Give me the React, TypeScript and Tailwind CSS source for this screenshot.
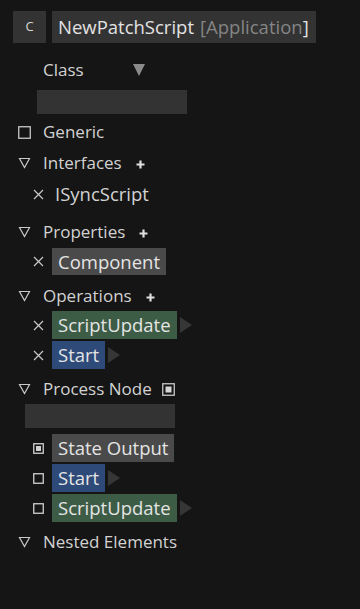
import React from 'react';

const font = { fontFamily: '"Open Sans", "Noto Sans", sans-serif' };

const Tri = () => (
  <svg width="13" height="12" viewBox="0 0 13 12" className="shrink-0">
    <path d="M1.5 1.5 H11.5 L6.5 10.5 Z" fill="none" stroke="#c8c8c8" strokeWidth="1.2" />
  </svg>
);

const Box = () => (
  <svg width="13" height="13" viewBox="0 0 13 13" className="shrink-0">
    <rect x="0.75" y="0.75" width="11.5" height="11.5" fill="none" stroke="#c8c8c8" strokeWidth="1.3" />
  </svg>
);

const SmallBox = ({ filled }: { filled?: boolean }) => (
  <svg width="11" height="11" viewBox="0 0 11 11" className="shrink-0">
    <rect x="0.75" y="0.75" width="9.5" height="9.5" fill="none" stroke="#d0d0d0" strokeWidth="1.3" />
    {filled && <rect x="3" y="3" width="5" height="5" fill="#d0d0d0" />}
  </svg>
);

const Cross = () => (
  <svg width="11" height="11" viewBox="0 0 11 11" className="shrink-0">
    <path d="M1 1 L10 10 M10 1 L1 10" stroke="#c8c8c8" strokeWidth="1.2" />
  </svg>
);

const Plus = () => (
  <svg width="9" height="9" viewBox="0 0 9 9" className="shrink-0">
    <path d="M4.5 0.5 V8.5 M0.5 4.5 H8.5" stroke="#e0e0e0" strokeWidth="2.2" />
  </svg>
);

const Arrow = () => (
  <svg width="12" height="16" viewBox="0 0 12 16" className="shrink-0 ml-[3px]">
    <path d="M0 0 L12 8 L0 16 Z" fill="#363636" />
  </svg>
);

const Section = ({ label, extra, mt = '' }: { label: string; extra?: React.ReactNode; mt?: string }) => (
  <div className={`flex items-center h-[30px] pl-[18px] ${mt}`}>
    <Tri />
    <span className="ml-[12px]">{label}</span>
    {extra}
  </div>
);

const Chip = ({ text, color, arrow }: { text: string; color: string; arrow?: boolean }) => (
  <div className="flex items-center">
    <div className={`h-[28px] flex items-center px-[6px] text-[18.5px] text-[#e4e4e4] ${color}`}>{text}</div>
    {arrow && <Arrow />}
  </div>
);

export default function App() {
  return (
    <div className="w-[360px] h-[609px] bg-[#151515] text-[#d2d2d2] text-[17px] overflow-hidden" style={font}>
      <div className="flex pt-[11px] pl-[13px] gap-[6px]">
        <div className="w-[33px] h-[32px] bg-[#333333] flex items-center justify-center text-[13px] text-[#d8d8d8]">C</div>
        <div className="w-[264px] h-[32px] bg-[#333333] flex items-center pl-[6px] text-[18.5px]">
          <span className="text-[#e2e2e2]">NewPatchScript</span>
          <span className="ml-[6px] text-[#858585]">[Application</span>
          <span className="text-[#e2e2e2]">]</span>
        </div>
      </div>

      <div className="flex items-center h-[26px] mt-[14px] pl-[43px]">
        <span className="w-[90px]">Class</span>
        <svg width="12" height="12" viewBox="0 0 12 12">
          <path d="M0 0 H12 L6 12 Z" fill="#8a8a8a" />
        </svg>
      </div>
      <div className="ml-[37px] mt-[7px] w-[150px] h-[24px] bg-[#333333]" />

      <div className="flex items-center h-[30px] mt-[3px] pl-[18px]">
        <Box />
        <span className="ml-[12px]">Generic</span>
      </div>
      <Section label="Interfaces" mt="mt-[1px]" extra={<span className="ml-[14px] mt-[2px]"><Plus /></span>} />
      <div className="flex items-center h-[30px] mt-[1px] pl-[33px]">
        <Cross />
        <span className="ml-[11px] text-[18.5px]">ISyncScript</span>
      </div>

      <Section label="Properties" mt="mt-[8px]" extra={<span className="ml-[14px] mt-[2px]"><Plus /></span>} />
      <div className="flex items-center mt-[1px] pl-[33px] gap-[8px]">
        <Cross />
        <div className="h-[27px] flex items-center px-[6px] bg-[#4a4a4a] text-[18.5px] text-[#e4e4e4]">Component</div>
      </div>

      <Section label="Operations" mt="mt-[6px]" extra={<span className="ml-[14px] mt-[2px]"><Plus /></span>} />
      <div className="flex flex-col gap-[2px]">
        <div className="flex items-center pl-[33px] gap-[8px]">
          <Cross />
          <Chip text="ScriptUpdate" color="bg-[#3d5c46]" arrow />
        </div>
        <div className="flex items-center pl-[33px] gap-[8px]">
          <Cross />
          <Chip text="Start" color="bg-[#2e4a78]" arrow />
        </div>
      </div>

      <Section
        label="Process Node"
        mt="mt-[5px]"
        extra={
          <span className="ml-[10px]">
            <svg width="13" height="13" viewBox="0 0 13 13">
              <rect x="0.75" y="0.75" width="11.5" height="11.5" fill="none" stroke="#c8c8c8" strokeWidth="1.3" />
              <rect x="3.5" y="3.5" width="6" height="6" fill="#d6d6d6" />
            </svg>
          </span>
        }
      />
      <div className="ml-[25px] w-[150px] h-[24px] bg-[#333333]" />
      <div className="flex flex-col gap-[2px] mt-[6px]">
        <div className="flex items-center pl-[33px] gap-[8px]">
          <SmallBox filled />
          <Chip text="State Output" color="bg-[#4a4a4a]" />
        </div>
        <div className="flex items-center pl-[33px] gap-[8px]">
          <SmallBox />
          <Chip text="Start" color="bg-[#2e4a78]" arrow />
        </div>
        <div className="flex items-center pl-[33px] gap-[8px]">
          <SmallBox />
          <Chip text="ScriptUpdate" color="bg-[#3d5c46]" arrow />
        </div>
      </div>

      <Section label="Nested Elements" mt="mt-[5px]" />
    </div>
  );
}
